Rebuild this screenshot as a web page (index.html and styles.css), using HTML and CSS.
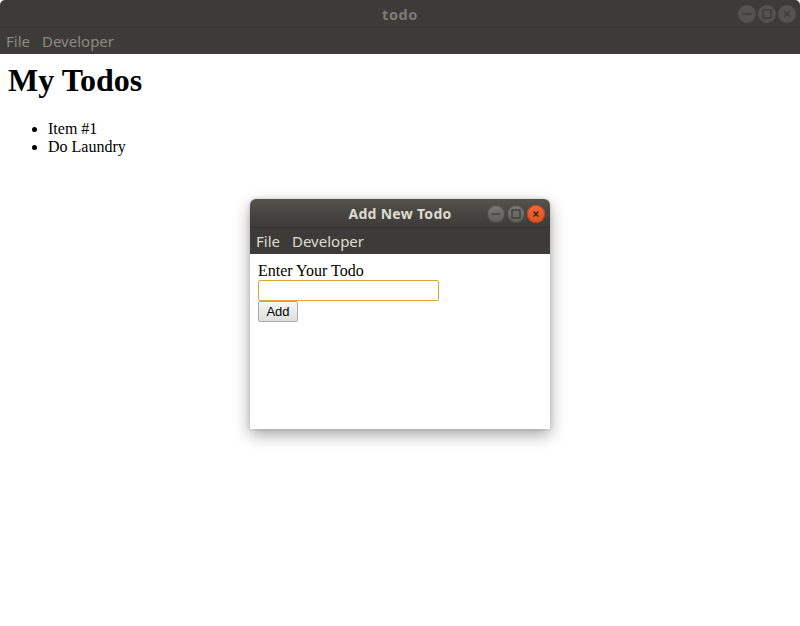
FILE: index.html
```
<!DOCTYPE html>
<html>
<head>
<meta charset="utf-8">
<link rel="stylesheet" href="styles.css">
</head>
<body>
<div class="window main">
  <div class="titlebar">
    <span class="title">todo</span>
    <div class="controls">
      <span class="btn"><svg viewBox="0 0 18 18"><path d="M4.5 9h9" /></svg></span>
      <span class="btn"><svg viewBox="0 0 18 18"><rect x="5" y="5" width="8" height="8" /></svg></span>
      <span class="btn"><svg viewBox="0 0 18 18"><path d="M6 6l6 6M12 6l-6 6" /></svg></span>
    </div>
  </div>
  <div class="menubar"><span>File</span><span>Developer</span></div>
  <div class="page">
    <h1>My Todos</h1>
    <ul>
      <li>Item #1</li>
      <li>Do Laundry</li>
    </ul>
  </div>
</div>

<div class="window dialog">
  <div class="titlebar">
    <span class="title">Add New Todo</span>
    <div class="controls">
      <span class="btn"><svg viewBox="0 0 18 18"><path d="M4.5 9h9" /></svg></span>
      <span class="btn"><svg viewBox="0 0 18 18"><rect x="5" y="5" width="8" height="8" /></svg></span>
      <span class="btn close"><svg viewBox="0 0 18 18"><path d="M6.5 6.5l5 5M11.5 6.5l-5 5" /></svg></span>
    </div>
  </div>
  <div class="menubar"><span>File</span><span>Developer</span></div>
  <div class="page form">
    <div class="label">Enter Your Todo</div>
    <div class="field"></div>
    <button class="add">Add</button>
  </div>
</div>
</body>
</html>
```
FILE: styles.css
```
html, body {
  margin: 0;
  padding: 0;
  background: #ffffff;
}
body {
  width: 800px;
  height: 626px;
  position: relative;
  overflow: hidden;
  font-family: "Liberation Serif", serif;
}
.window {
  display: flex;
  flex-direction: column;
  background: #fff;
}
.main {
  width: 800px;
  height: 626px;
}
.titlebar {
  height: 28px;
  position: relative;
  display: flex;
  align-items: center;
  justify-content: center;
  background: linear-gradient(#3f3e3a, #3b3a36);
  border-bottom: 1px solid #363531;
  box-sizing: border-box;
}
.main .titlebar {
  border-radius: 5px 5px 0 0;
  background: #3c3b37;
}
.title {
  font-family: "Noto Sans", "DejaVu Sans", sans-serif;
  font-weight: bold;
  font-size: 14px;
  color: #7d7b76;
  letter-spacing: 0.3px;
}
.main .title {
  font-size: 14.5px;
  letter-spacing: 0.6px;
}
.controls {
  position: absolute;
  right: 4px;
  top: 5px;
  display: flex;
  gap: 2px;
}
.btn {
  width: 18px;
  height: 18px;
  border-radius: 50%;
  background: #53524e;
  display: block;
}
.btn svg {
  width: 18px;
  height: 18px;
  display: block;
  fill: none;
  stroke: #3a3935;
  stroke-width: 1.3;
}
.menubar {
  height: 26px;
  background: #3c3b37;
  display: flex;
  align-items: center;
  gap: 12px;
  padding-left: 6px;
  font-family: "Noto Sans", "DejaVu Sans", sans-serif;
  font-size: 15px;
  color: #8b8984;
}
.page {
  flex: 1;
  padding: 8px;
}
h1 {
  font-size: 32px;
  font-weight: bold;
  margin: 0 0 21px 0;
  line-height: 37px;
}
ul {
  margin: 0;
  padding-left: 40px;
  font-size: 16px;
  line-height: 18px;
}
.dialog {
  position: absolute;
  left: 250px;
  top: 199px;
  width: 300px;
  height: 230px;
  border-radius: 6px 6px 0 0;
  box-shadow: 0 6px 16px rgba(0, 0, 0, 0.35), 0 0 4px rgba(0, 0, 0, 0.15);
}
.dialog .titlebar {
  height: 29px;
  border-radius: 6px 6px 0 0;
  background: linear-gradient(#56534e, #44433f 60%, #3d3c38);
  border-bottom: 1px solid #33322e;
}
.dialog .title {
  color: #dfdbd2;
}
.dialog .controls {
  right: 5px;
  top: 6px;
}
.dialog .btn {
  background: linear-gradient(#7c7a75, #5f5d59);
  box-shadow: inset 0 0 0 1px #4a4945;
}
.dialog .btn.close {
  background: linear-gradient(#f26a3b, #e0501c);
  box-shadow: inset 0 0 0 1px #c4461a;
}
.dialog .btn svg {
  stroke: #3c3b37;
}
.dialog .btn.close svg {
  stroke: #3c2418;
  stroke-width: 1.5;
}
.dialog .menubar {
  color: #dfdbd2;
}
.form {
  font-size: 16px;
}
.label {
  line-height: 18px;
}
.field {
  width: 179px;
  height: 19px;
  border: 1px solid #e1a330;
  border-radius: 2px;
  background: #fff;
}
.add {
  display: block;
  width: 40px;
  height: 21px;
  margin: 0;
  padding: 0;
  font-family: "Liberation Sans", Arial, sans-serif;
  font-size: 13px;
  color: #000;
  background: linear-gradient(#f6f6f6, #dedede);
  border: 1px solid #a9a9a9;
  border-radius: 2px;
}
```
